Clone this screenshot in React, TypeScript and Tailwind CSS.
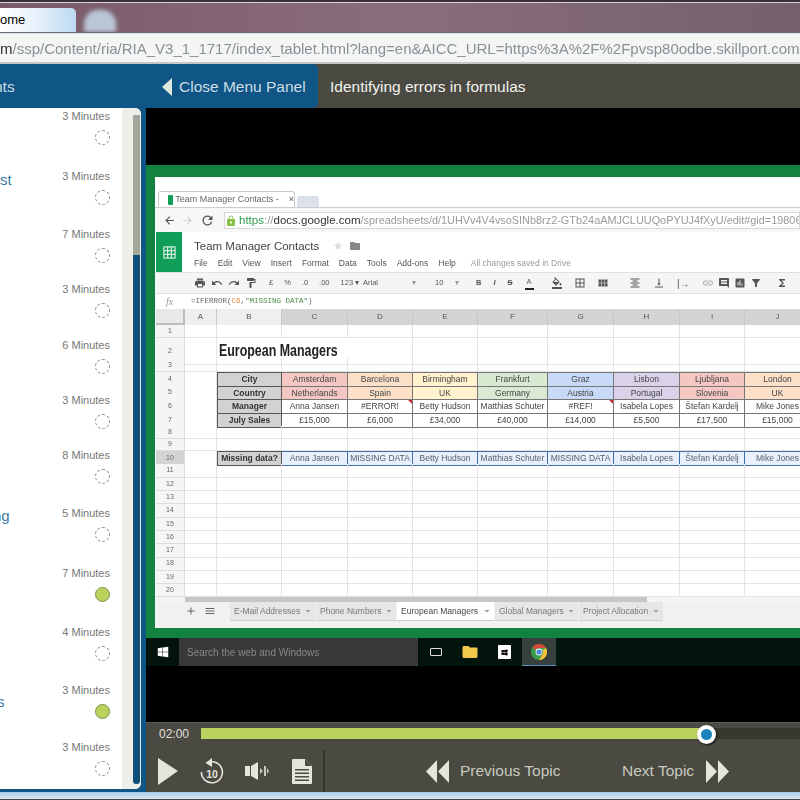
import {
  MdAdd,
  MdArrowBack,
  MdArrowForward,
  MdBorderAll,
  MdFilterAlt,
  MdFolder,
  MdFormatAlignCenter,
  MdFormatColorFill,
  MdFormatPaint,
  MdFunctions,
  MdInsertChart,
  MdInsertComment,
  MdLink,
  MdLock,
  MdMenu,
  MdPrint,
  MdRedo,
  MdRefresh,
  MdStar,
  MdUndo,
  MdVerticalAlignBottom,
  MdViewModule,
  MdArrowDropDown,
  MdGridOn,
} from "react-icons/md";
import { FaWindows } from "react-icons/fa";

const lessons = [
  { h: "h-[60px]", time: "3 Minutes", done: false, label: "", pos: "" },
  { h: "h-[58px]", time: "3 Minutes", done: false, label: "st", pos: "left-0 top-0" },
  { h: "h-[55px]", time: "7 Minutes", done: false, label: "", pos: "" },
  { h: "h-[56px]", time: "3 Minutes", done: false, label: "", pos: "" },
  { h: "h-[55px]", time: "6 Minutes", done: false, label: "", pos: "" },
  { h: "h-[55px]", time: "3 Minutes", done: false, label: "", pos: "" },
  { h: "h-[58px]", time: "8 Minutes", done: false, label: "", pos: "" },
  { h: "h-[60px]", time: "5 Minutes", done: false, label: "ng", pos: "left-[-7px] top-[-1px]" },
  { h: "h-[59px]", time: "7 Minutes", done: true, label: "", pos: "" },
  { h: "h-[58px]", time: "4 Minutes", done: false, label: "", pos: "" },
  { h: "h-[57px]", time: "3 Minutes", done: true, label: "s", pos: "left-[-3px] top-[8px]" },
  { h: "h-[50px]", time: "3 Minutes", done: false, label: "", pos: "" },
];

const gridCols = "grid grid-cols-[29px_32px_65px_66px_65px_65px_70px_66px_66px_65px_66px]";

const cityTints = [
  "bg-[#f4c7c3]",
  "bg-[#fce0c8]",
  "bg-[#fff2cc]",
  "bg-[#d9ead3]",
  "bg-[#c9daf8]",
  "bg-[#d9d2e9]",
  "bg-[#f4c7c3]",
  "bg-[#fce0c8]",
];

const cities = ["Amsterdam", "Barcelona", "Birmingham", "Frankfurt", "Graz", "Lisbon", "Ljubljana", "London"];
const countries = ["Netherlands", "Spain", "UK", "Germany", "Austria", "Portugal", "Slovenia", "UK"];
const managers = ["Anna Jansen", "#ERROR!", "Betty Hudson", "Matthias Schuter", "#REF!", "Isabela Lopes", "Štefan Kardelj", "Mike Jones"];
const sales = ["£15,000", "£6,000", "£34,000", "£40,000", "£14,000", "£5,500", "£17,500", "£15,000"];
const missing = ["Anna Jansen", "MISSING DATA", "Betty Hudson", "Matthias Schuter", "MISSING DATA", "Isabela Lopes", "Štefan Kardelj", "Mike Jones"];

const rowHeights: Record<number, string> = {
  2: "h-[20px]",
  3: "h-[14px]",
  6: "h-[14px]",
  8: "h-[12.5px]",
  9: "h-[12.5px]",
};

function DataRow({ label, values, tinted }: { label: string; values: string[]; tinted?: boolean }) {
  return (
    <>
      <div className="flex items-center justify-center bg-[#d2d2d2] border border-[#555555] font-bold text-[#333333] text-[8.5px]">
        {label}
      </div>
      {values.map((v, i) => (
        <div
          key={i}
          className={`relative flex items-center justify-center border-y border-r border-[#777777] text-[8.5px] text-[#444444] whitespace-nowrap ${
            tinted ? cityTints[i] : "bg-white"
          }`}
        >
          {v}
          {(v === "#ERROR!" || v === "#REF!") && (
            <span className="absolute top-0 right-0 border-l-[4px] border-b-[4px] border-l-transparent border-b-transparent border-t-[4px] border-t-[#d03030] border-r-0" />
          )}
        </div>
      ))}
    </>
  );
}

function Sheet() {
  const rows = Array.from({ length: 20 }, (_, i) => i + 1);
  return (
    <div className="flex flex-col">
      <div className={`${gridCols} h-[16px] text-[8px] text-[#555555]`}>
        <div className="bg-[#e8e8e8] border-r-2 border-b-2 border-[#bdbdbd]" />
        {["A", "B", "C", "D", "E", "F", "G", "H", "I", "J"].map((c, i) => (
          <div
            key={c}
            className={`flex items-center justify-center border-r border-[#c8c8c8] ${i < 2 ? "bg-[#efefef]" : "bg-[#d4d4d4]"}`}
          >
            {c}
          </div>
        ))}
      </div>
      {rows.map((n) => {
        const h = rowHeights[n] ?? "h-[13.3px]";
        let body;
        if (n === 2) {
          body = (
            <>
              <div className="border-r border-b border-[#e4e4e4]" />
              <div className="col-span-2 flex items-center border-b border-[#e4e4e4] pl-[2px] text-[17px] font-bold text-[#222222] whitespace-nowrap">
                <span className="origin-left scale-x-[0.73]">European Managers</span>
              </div>
              {[0, 1, 2, 3, 4, 5, 6, 7].map((k) => (
                <div key={k} className="border-r border-b border-[#e4e4e4]" />
              ))}
            </>
          );
        } else if (n === 4) {
          body = (
            <>
              <div className="border-r border-[#e4e4e4]" />
              <DataRow label="City" values={cities} tinted />
            </>
          );
        } else if (n === 5) {
          body = (
            <>
              <div className="border-r border-[#e4e4e4]" />
              <DataRow label="Country" values={countries} tinted />
            </>
          );
        } else if (n === 6) {
          body = (
            <>
              <div className="border-r border-[#e4e4e4]" />
              <DataRow label="Manager" values={managers} />
            </>
          );
        } else if (n === 7) {
          body = (
            <>
              <div className="border-r border-[#e4e4e4]" />
              <DataRow label="July Sales" values={sales} />
            </>
          );
        } else if (n === 10) {
          body = (
            <>
              <div className="border-r border-[#e4e4e4]" />
              <div className="flex items-center justify-center bg-[#d2d2d2] border border-[#555555] font-bold text-[#333333] text-[8.5px]">
                Missing data?
              </div>
              {missing.map((v, i) => (
                <div
                  key={i}
                  className="flex items-center justify-center bg-[#e8f0fe] border-y border-r border-[#3f6fa8] text-[8.5px] text-[#555f6e] whitespace-nowrap"
                >
                  {v}
                </div>
              ))}
            </>
          );
        } else {
          body = Array.from({ length: 10 }, (_, k) => (
            <div key={k} className="border-r border-b border-[#e4e4e4]" />
          ));
        }
        return (
          <div key={n} className={`${gridCols} ${h} text-[7px] text-[#666666]`}>
            <div
              className={`flex items-center justify-center border-r border-b border-[#dcdcdc] ${
                n === 10 ? "bg-[#d4d4d4]" : "bg-[#f5f5f5]"
              }`}
            >
              {n}
            </div>
            {body}
          </div>
        );
      })}
    </div>
  );
}

function SheetTab({ name, w, active }: { name: string; w: string; active?: boolean }) {
  return (
    <div
      className={`${w} h-[19px] flex items-center justify-between pl-[4px] pr-[1px] text-[8.5px] whitespace-nowrap ${
        active ? "bg-white text-[#444444] border-b border-[#cccccc]" : "bg-[#e6e6e6] text-[#777777] border-b border-[#cfcfcf]"
      }`}
    >
      {name}
      <MdArrowDropDown className="text-[12px] text-[#999999]" />
    </div>
  );
}

function Toolbar() {
  const icon = "text-[12px] text-[#555555]";
  return (
    <div className="h-[22px] flex items-center bg-[#f5f5f5] border-y border-[#e2e2e2] pl-[39px] text-[7.5px] text-[#555555] whitespace-nowrap">
      <div className="flex items-center gap-[5px] w-[72px]">
        <MdPrint className={icon} />
        <MdUndo className={icon} />
        <MdRedo className={icon} />
        <MdFormatPaint className={icon} />
      </div>
      <div className="flex items-center gap-[11px] w-[97px] pl-[3px]">
        <span>£</span>
        <span>%</span>
        <span>.0</span>
        <span>.00</span>
        <span>123 ▾</span>
      </div>
      <div className="w-[70px] pr-[17px] flex justify-between">
        Arial
        <span className="text-[#999999]">▾</span>
      </div>
      <div className="w-[43px] pr-[17px] pl-[2px] flex justify-between">
        10
        <span className="text-[#999999]">▾</span>
      </div>
      <div className="flex items-center gap-[12px] w-[75px] font-bold">
        <span>B</span>
        <span className="italic">I</span>
        <span className="line-through">S</span>
        <span className="border-b-2 border-[#222222] px-[2px] font-normal">A</span>
      </div>
      <div className="flex items-center gap-[11px] w-[78px]">
        <MdFormatColorFill className={icon} />
        <MdBorderAll className={icon} />
        <MdViewModule className={icon} />
      </div>
      <div className="flex items-center gap-[12px] w-[73px]">
        <MdFormatAlignCenter className={icon} />
        <MdVerticalAlignBottom className={icon} />
        <span className="text-[10px]">|→</span>
      </div>
      <div className="flex items-center gap-[4px]">
        <MdLink className="text-[12px] text-[#aaaaaa]" />
        <MdInsertComment className={icon} />
        <MdInsertChart className={icon} />
        <MdFilterAlt className={icon} />
        <MdFunctions className={`${icon} ml-[10px]`} />
      </div>
    </div>
  );
}

function ScreenCapture() {
  return (
    <div className="flex-1 min-h-0 overflow-hidden bg-white blur-[0.6px] font-['Liberation_Sans',sans-serif]">
      {/* browser tab strip */}
      <div className="h-[30px] flex items-end pl-[3px]">
        <div className="w-[137px] h-[16px] flex items-center gap-[2px] pl-[9px] border-x border-t border-[#c8c8c8] rounded-t-[3px] bg-white text-[9px] text-[#666666] whitespace-nowrap">
          <span className="w-[10px] h-[10px] bg-[#0f9d58] rounded-[1px]" />
          Team Manager Contacts -
          <span className="ml-[8px] text-[#555555]">×</span>
        </div>
        <div className="w-[22px] h-[11px] bg-[#dde2ea] rounded-t-[3px] ml-[2px]" />
      </div>
      {/* nav bar */}
      <div className="h-[25px] flex items-center gap-[5px] pl-[8px] pt-[1px] border-t border-[#cccccc] bg-[#f7f7f7] text-[#555555]">
        <MdArrowBack className="text-[13px]" />
        <MdArrowForward className="text-[13px] text-[#cfcfcf]" />
        <MdRefresh className="text-[15px] ml-[1px]" />
        <div className="flex-1 h-[17px] ml-[4px] flex items-center bg-white border border-[#d8d8d8] text-[11.5px] text-[#9a9a9a] whitespace-nowrap overflow-hidden">
          <MdLock className="text-[12px] text-[#8bc34a] shrink-0" />
          <span className="text-[#2e9e4f] ml-[2px]">https</span>
          <span>://</span>
          <span className="text-[#333333]">docs.google.com</span>
          <span className="text-[10.9px]">/spreadsheets/d/1UHVv4V4vsoSINb8rz2-GTb24aAMJCLUUQoPYUJ4fXyU/edit#gid=19806</span>
        </div>
      </div>
      {/* sheets header */}
      <div className="h-[40px] flex">
        <div className="w-[26px] flex items-center justify-center bg-[#0f9d58] ml-[1px]">
          <MdGridOn className="text-[15px] text-[#cdeedd]" />
        </div>
        <div className="pl-[12px] pt-[6px] text-[#555555]">
          <div className="flex items-center gap-[14px] text-[11.5px] text-[#444444] leading-[16px]">
            Team Manager Contacts
            <span className="flex items-center gap-[6px]">
              <MdStar className="text-[10px] text-[#dddddd]" />
              <MdFolder className="text-[12px] text-[#888888]" />
            </span>
          </div>
          <div className="flex items-center gap-[10px] mt-[3px] text-[8.5px] whitespace-nowrap">
            <span>File</span>
            <span>Edit</span>
            <span>View</span>
            <span>Insert</span>
            <span>Format</span>
            <span>Data</span>
            <span>Tools</span>
            <span>Add-ons</span>
            <span>Help</span>
            <span className="ml-[5px] text-[#999999]">All changes saved in Drive</span>
          </div>
        </div>
      </div>
      <Toolbar />
      {/* formula bar */}
      <div className="h-[15px] flex items-center bg-white">
        <span className="w-[36px] pl-[11px] font-['Liberation_Serif',serif] italic text-[10px] text-[#999999]">fx</span>
        <span className="font-['Liberation_Mono',monospace] text-[7.5px] text-[#666666]">
          =IFERROR(<span className="text-[#e69138]">C6</span>,<span className="text-[#4a8a4a]">"MISSING DATA"</span>)
        </span>
      </div>
      <div className="pl-[1px]">
        <Sheet />
      </div>
      {/* sheet scrollbar */}
      <div className="h-[5px] flex bg-[#f4f4f4] pl-[30px]">
        <div className="w-[462px] bg-[#c6c6c6]" />
      </div>
      {/* sheet tabs */}
      <div className="h-[26px] flex items-start bg-[#f1f1f1] pl-[27px] gap-[1px] text-[#666666]">
        <MdAdd className="text-[12px] mt-[3px] w-[18px] shrink-0" />
        <MdMenu className="text-[12px] mt-[3px] w-[18px] mr-[10px] shrink-0" />
        <SheetTab name="E-Mail Addresses" w="w-[85px]" />
        <SheetTab name="Phone Numbers" w="w-[80px]" />
        <SheetTab name="European Managers" w="w-[97px]" active />
        <SheetTab name="Global Managers" w="w-[83px]" />
        <SheetTab name="Project Allocation" w="w-[84px]" />
      </div>
    </div>
  );
}

function Taskbar() {
  return (
    <div className="h-[28px] flex items-center bg-[#03140c] blur-[0.4px] font-['Liberation_Sans',sans-serif]">
      <div className="w-[33px] flex justify-center">
        <FaWindows className="text-[12px] text-white" />
      </div>
      <div className="w-[239px] h-full flex items-center pl-[8px] bg-[#393939] text-[10px] text-[#888888]">
        Search the web and Windows
      </div>
      <div className="w-[35px] flex justify-center">
        <div className="w-[12px] h-[8px] border border-[#dddddd] rounded-[1px]" />
      </div>
      <div className="w-[34px] flex justify-center">
        <MdFolder className="text-[18px] text-[#f2c94c]" />
      </div>
      <div className="w-[34px] flex justify-center">
        <div className="w-[13px] h-[14px] bg-white rounded-[1px] flex items-center justify-center">
          <FaWindows className="text-[7px] text-black" />
        </div>
      </div>
      <div className="w-[34px] h-full flex items-center justify-center bg-[#36403c] border-b border-[#5a90c0] ml-[1px]">
        <svg width="16" height="16" viewBox="0 0 16 16">
          <circle cx="8" cy="8" r="8" fill="#3d9b4a" />
          <path d="M8 0a8 8 0 0 1 7 4H8a4 4 0 0 0-3.6 2.2L1.7 3A8 8 0 0 1 8 0z" fill="#d9443b" />
          <path d="M15 4a8 8 0 0 1-7 12l3.2-5.4A4 4 0 0 0 11.5 6z" fill="#f2c23c" />
          <circle cx="8" cy="8" r="3.4" fill="#ffffff" />
          <circle cx="8" cy="8" r="2.6" fill="#4a86d8" />
        </svg>
      </div>
    </div>
  );
}

function Controls() {
  return (
    <div className="h-[70px] flex flex-col bg-[#4a4a42] border-t border-[#5b5b52] font-['Liberation_Sans',sans-serif]">
      <div className="h-[21px] flex items-center gap-[14px] pl-[13px]">
        <span className="w-[28px] text-[12px] text-[#e0e0da]">02:00</span>
        <div className="flex-1 relative h-[11px] bg-[#38382f] flex">
          <div className="w-[505px] bg-[#b9d35c]" />
          <div className="absolute left-[496px] top-[-3px] w-[19px] h-[19px] rounded-full bg-[#1a82bd] border-[4px] border-white shadow-[1px_1px_2px_#111111]" />
        </div>
      </div>
      <div className="flex-1 flex items-center mt-[6px] text-[#e4e6dc]">
        <div className="w-[179px] h-full flex items-center pl-[11px] border-r-2 border-[#35352e]">
          <svg width="22" height="28" viewBox="0 0 22 28">
            <path d="M1 1L21 14L1 28z" fill="#e4e6dc" />
          </svg>
          <svg width="26" height="28" viewBox="0 0 26 28" className="ml-[20px]">
            <path d="M8 6A10.5 10.5 0 1 1 2.4 15" fill="none" stroke="#e4e6dc" strokeWidth="1.6" />
            <path d="M13 1L6.5 6L13 10z" fill="#e4e6dc" />
            <text x="13" y="21" textAnchor="middle" fontSize="10.5" fontWeight="bold" fontFamily="Liberation Sans" fill="#e4e6dc">
              10
            </text>
          </svg>
          <svg width="24" height="18" viewBox="0 0 24 18" className="ml-[20px]">
            <path d="M0 4h5v10H0zM6 4l7-4v18l-7-4z" fill="#e4e6dc" />
            <path d="M15 6v6l3-3zM19 4h2v10h-2z" fill="#c8cabf" />
            <path d="M22 6l2 3-2 3z" fill="#c8cabf" />
          </svg>
          <svg width="20" height="25" viewBox="0 0 20 25" className="ml-[23px]">
            <path d="M0 1a1 1 0 0 1 1-1h12l7 7v17a1 1 0 0 1-1 1H1a1 1 0 0 1-1-1z" fill="#e4e6dc" />
            <path d="M13 0l7 7h-6a1 1 0 0 1-1-1z" fill="#4a4a42" />
            <path d="M3 10h14v1.6H3zM3 13.500h14v1.600H3zM3 17h14v1.600H3zM3 20.500h14v1.600H3z" fill="#4a4a42" />
          </svg>
        </div>
        <div className="flex-1 flex items-center pl-[101px] text-[15.5px] text-[#c8c9be]">
          <svg width="23" height="23" viewBox="0 0 23 23">
            <path d="M11 0v23L0 11.500zM23 0v23L12 11.500z" fill="#e4e6dc" />
          </svg>
          <span className="ml-[11px] w-[162px]">Previous Topic</span>
          <span className="w-[84px]">Next Topic</span>
          <svg width="23" height="23" viewBox="0 0 23 23">
            <path d="M0 0v23l11-11.500zM12 0v23l11-11.500z" fill="#e4e6dc" />
          </svg>
        </div>
      </div>
    </div>
  );
}

export default function App() {
  return (
    <div className="w-[800px] h-[800px] overflow-hidden flex flex-col bg-black font-['Liberation_Sans',sans-serif]">
      {/* window title bar */}
      <div className="h-[3px] bg-[#3a3036] border-b border-[#d8d4d8]" />
      <div className="h-[29px] flex items-end bg-gradient-to-r from-[#7a5a68] via-[#8a6d7c] to-[#75606c] overflow-hidden">
        <div className="w-[76px] h-[24px] flex items-center rounded-tr-[5px] bg-gradient-to-r from-white via-[#e6f0fa] to-[#bcd9f2] text-[13px] text-black">
          ome
        </div>
        <div className="w-[32px] h-[22px] ml-[8px] rounded-t-[14px] bg-[#b9c6d8] blur-[2px]" />
      </div>
      {/* address bar */}
      <div className="h-[32px] flex items-center bg-[#dfe2e6] border-t border-[#6d6f78] border-b-2 border-b-[#c4c6c8]">
        <div className="w-full h-[28px] flex items-center pt-[3px] bg-[#f4f5f5] text-[15px] text-[#8b8f96] whitespace-nowrap overflow-hidden blur-[0.3px]">
          <span className="text-[#333333]">m</span>/ssp/Content/ria/RIA_V3_1_1717/index_tablet.html?lang=en&amp;AICC_URL=https%3A%2F%2Fpvsp80odbe.skillport.com
        </div>
      </div>
      {/* course header */}
      <div className="h-[44px] flex bg-[#4a4a42] text-[15.5px]">
        <div className="w-[318px] flex items-center pt-[1px] rounded-r-[5px] bg-[#0f5585] text-[#cddde6] overflow-hidden">
          <span className="w-[168px] ml-[-6px]">nts</span>
          <svg width="10" height="18" viewBox="0 0 10 18">
            <path d="M10 0v18L0 9z" fill="#dfe8dd" />
          </svg>
          <span className="ml-[7px]">Close Menu Panel</span>
        </div>
        <div className="flex items-center pl-[12px] pt-[1px] text-[#f2f2ee]">Identifying errors in formulas</div>
      </div>
      {/* main area */}
      <div className="h-[684px] flex min-h-0">
        {/* lesson menu */}
        <div className="w-[146px] shrink-0 bg-[#0f5585] pr-[5px] pb-[3px]">
          <div className="h-full flex rounded-r-[6px] overflow-hidden bg-white">
            <div className="flex-1 pt-[2px]">
              {lessons.map((l, i) => (
                <div key={i} className={`${l.h} relative pr-[12px]`}>
                  <div className="text-right text-[11px] leading-[13px] text-[#777777]">{l.time}</div>
                  <div
                    className={`mt-[7px] ml-auto mr-[0px] w-[15px] h-[15px] rounded-full ${
                      l.done ? "bg-[#b9d35c] border border-[#7f8f50]" : "border border-dashed border-[#8a8a8a]"
                    }`}
                  />
                  {l.label && (
                    <span className={`absolute ${l.pos} text-[15px] leading-[20px] text-[#3a7ba8]`}>{l.label}</span>
                  )}
                </div>
              ))}
            </div>
            <div className="w-[19px] flex justify-end bg-[#eeeee8] pt-[7px] pb-[5px] pr-[1px]">
              <div className="w-[7px] h-full flex flex-col rounded-[3px] overflow-hidden bg-[#0f4f7b]">
                <div className="h-[140px] bg-[#a4a89c]" />
              </div>
            </div>
          </div>
        </div>
        {/* player */}
        <div className="flex-1 min-w-0 flex flex-col bg-black">
          <div className="h-[57px]" />
          <div className="h-[473px] flex flex-col bg-[#118240] pl-[9px] pt-[12px] pb-[10px]">
            <ScreenCapture />
          </div>
          <Taskbar />
          <div className="h-[56px]" />
          <Controls />
        </div>
      </div>
      <div className="h-[8px] bg-gradient-to-b from-[#a9cbe8] to-[#d6e6f4] border-b border-[#444444]" />
    </div>
  );
}
